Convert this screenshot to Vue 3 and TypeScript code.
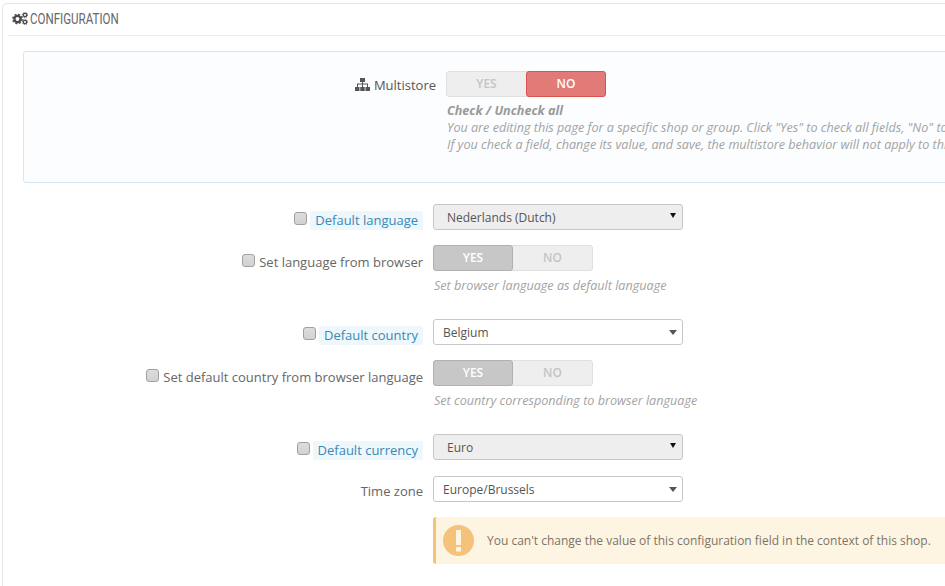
<script setup lang="ts">
interface Row {
  label: string
  kind: 'select' | 'toggle'
  gap: string
  check?: boolean
  tag?: boolean
  disabled?: boolean
  value?: string
  help?: string
}
const rows: Row[] = [
  { label: 'Default language', kind: 'select', gap: 'gap-21', check: true, tag: true, disabled: true, value: 'Nederlands (Dutch)' },
  { label: 'Set language from browser', kind: 'toggle', gap: 'gap-15', check: true, help: 'Set browser language as default language' },
  { label: 'Default country', kind: 'select', gap: 'gap-25', check: true, tag: true, value: 'Belgium' },
  { label: 'Set default country from browser language', kind: 'toggle', gap: 'gap-15', check: true, help: 'Set country corresponding to browser language' },
  { label: 'Default currency', kind: 'select', gap: 'gap-25', check: true, tag: true, disabled: true, value: 'Euro' },
  { label: 'Time zone', kind: 'select', gap: 'gap-16', value: 'Europe/Brussels' },
]
</script>

<template>
  <div class="page">
    <section class="panel">
      <h3 class="heading">
        <svg class="cogs" viewBox="0 0 16 13" width="16" height="13" aria-hidden="true">
          <g fill="none" stroke="#4a4a4a">
            <circle cx="5.500" cy="7" r="3.100" stroke-width="2.300" />
            <circle cx="5.500" cy="7" r="4.600" stroke-width="1.500" stroke-dasharray="2 1.610" />
            <circle cx="13" cy="3" r="1.700" stroke-width="1.300" />
            <circle cx="13" cy="3" r="2.700" stroke-width=".9" stroke-dasharray="1.100 1.020" />
            <circle cx="13" cy="10" r="1.700" stroke-width="1.300" />
            <circle cx="13" cy="10" r="2.700" stroke-width=".9" stroke-dasharray="1.100 1.020" />
          </g>
        </svg>
        <span class="title">CONFIGURATION</span>
      </h3>

      <div class="info">
        <div class="info-row">
          <div class="info-label">
            <svg viewBox="0 0 15 13" width="15" height="13" aria-hidden="true">
              <g fill="#555">
                <rect x="5" y="0" width="5" height="4" />
                <rect x="7" y="4" width="1" height="2" />
                <rect x="2" y="5.500" width="11" height="1" />
                <rect x="2" y="6" width="1" height="3" />
                <rect x="7" y="6" width="1" height="3" />
                <rect x="12" y="6" width="1" height="3" />
                <rect x="0" y="9" width="4.500" height="4" />
                <rect x="5.250" y="9" width="4.500" height="4" />
                <rect x="10.500" y="9" width="4.500" height="4" />
              </g>
            </svg>
            <span>Multistore</span>
          </div>
          <div class="info-body">
            <div class="toggle">
              <span class="opt">YES</span>
              <span class="opt no-on">NO</span>
            </div>
            <p class="help strong">Check / Uncheck all</p>
            <p class="help">You are editing this page for a specific shop or group. Click "Yes" to check all fields, "No" to uncheck all.</p>
            <p class="help">If you check a field, change its value, and save, the multistore behavior will not apply to this shop.</p>
          </div>
        </div>
      </div>

      <div class="form">
        <div v-for="row in rows" :key="row.label" class="row" :class="row.gap">
          <div class="label" :class="{ 'label-toggle': row.kind === 'toggle', 'label-tag': row.tag }">
            <input v-if="row.check" type="checkbox" class="check" :aria-label="row.label" />
            <span :class="{ tag: row.tag }">{{ row.label }}</span>
          </div>
          <div class="control">
            <div v-if="row.kind === 'select'" class="select" :class="{ disabled: row.disabled }">
              <span>{{ row.value }}</span>
              <i class="caret" />
            </div>
            <template v-else>
              <div class="toggle">
                <span class="opt yes-on">YES</span>
                <span class="opt">NO</span>
              </div>
              <p class="help help-below">{{ row.help }}</p>
            </template>
          </div>
        </div>

        <div class="alert">
          <svg class="alert-icon" viewBox="0 0 31 31" width="31" height="31" aria-hidden="true">
            <circle cx="15.500" cy="15.500" r="15.500" fill="#f5c27a" />
            <rect x="13" y="5" width="5" height="15" fill="#fdf5e2" />
            <rect x="13" y="22" width="5" height="4.500" fill="#fdf5e2" />
          </svg>
          <span>You can't change the value of this configuration field in the context of this shop.</span>
        </div>
      </div>
    </section>
  </div>
</template>

<style>
html, body { margin: 0; background: #fff; overflow: hidden; }
</style>

<style scoped>
.page {
  width: 945px;
  height: 586px;
  overflow: hidden;
  background: #fff;
  font-family: "Open Sans", "Liberation Sans", sans-serif;
  font-size: 12px;
  color: #666;
}
.panel {
  width: 1100px;
  height: 700px;
  margin: 3px 0 0 2px;
  padding: 0 5px;
  box-sizing: border-box;
  border: 1px solid #e6e6e6;
  border-radius: 5px;
}
.heading {
  display: flex;
  align-items: center;
  gap: 2px;
  height: 29px;
  margin: 0 0 15px;
  padding: 0 0 2px 4px;
  border-bottom: 1px solid #eee;
  font-weight: 400;
}
.title {
  display: inline-block;
  font-family: "Roboto", sans-serif;
  font-size: 14px;
  color: #666;
  transform: scaleX(.825);
  transform-origin: left center;
}
.info {
  height: 132px;
  margin-left: 15px;
  padding-top: 19px;
  box-sizing: border-box;
  border: 1px solid #d3e8f2;
  border-radius: 3px;
  background: #fbfdff;
}
.info-row { display: flex; }
.info-label {
  width: 412px;
  height: 26px;
  flex: none;
  display: flex;
  align-items: center;
  justify-content: flex-end;
  gap: 4px;
  padding-top: 1px;
  box-sizing: border-box;
  font-size: 13px;
  color: #555;
}
.info-body { margin-left: 10px; }
.toggle {
  display: flex;
  width: 160px;
  height: 26px;
  box-sizing: border-box;
  border: 1px solid #e0e0e0;
  border-radius: 3px;
  background: #eee;
  font-size: 12px;
  font-weight: 600;
}
.opt {
  width: 79px;
  flex: none;
  display: flex;
  align-items: center;
  justify-content: center;
  padding-bottom: 2px;
  color: #c4c4c4;
  box-sizing: border-box;
}
.no-on {
  width: 80px;
  margin: -1px -1px -1px 0;
  background: #e27b77;
  border: 1px solid #d9534f;
  border-radius: 3px;
  color: #fff;
}
.yes-on {
  width: 80px;
  margin: -1px 0 -1px -1px;
  background: #c7c7c7;
  border: 1px solid #b0b0b0;
  border-radius: 3px;
  color: #fff;
}
.help {
  margin: 0;
  padding-left: 1px;
  font-size: 12.600px;
  line-height: 17px;
  font-style: italic;
  color: #a3a3a3;
  white-space: nowrap;
}
.strong { margin-top: 5px; font-weight: 700; color: #999; }
.help-below { margin-top: 6px; }

.form { display: flex; flex-direction: column; }
.row { display: flex; }
.gap-21 { margin-top: 21px; }
.gap-15 { margin-top: 15px; }
.gap-25 { margin-top: 25px; }
.gap-16 { margin-top: 16px; }
.label {
  width: 415px;
  height: 26px;
  flex: none;
  display: flex;
  justify-content: flex-end;
  align-items: center;
  gap: 4px;
  padding-top: 4px;
  box-sizing: border-box;
  font-size: 13px;
  color: #666;
  white-space: nowrap;
}
.label-toggle { padding-top: 8px; }
.label-tag { padding-top: 0; align-items: flex-start; gap: 3px; }
.tag {
  display: inline-flex;
  align-items: center;
  height: 19px;
  margin-top: 7px;
  padding: 0 5px 1px;
  box-sizing: border-box;
  border-radius: 2px;
  background: #edf7fc;
  color: #3c88b4;
}
.check {
  appearance: none;
  width: 13px;
  height: 13px;
  margin: 0 0 3px;
  box-sizing: border-box;
  border: 1px solid #a0a0a0;
  border-radius: 3px;
  background: linear-gradient(#dcdcdc, #d2d2d2);
}
.label-tag .check { margin: 8px 0 0; }
.control { width: 250px; margin-left: 10px; }
.select {
  position: relative;
  height: 26px;
  display: flex;
  align-items: center;
  padding-left: 9px;
  box-sizing: border-box;
  border: 1px solid #c7c7c7;
  border-radius: 3px;
  background: #fff;
  color: #555;
  font-size: 12px;
}
.select.disabled { padding-left: 13px; background: #eee; }
.caret {
  position: absolute;
  right: 5px;
  top: 10px;
  width: 0;
  height: 0;
  border-style: solid;
  border-color: #555 transparent transparent;
  border-width: 5px 4px 0;
}
.disabled .caret { top: 8px; right: 6px; border-top-color: #111; border-width: 5px 3px 0; }
.alert {
  display: flex;
  align-items: center;
  gap: 13px;
  width: 640px;
  height: 47px;
  margin: 15px 0 0 425px;
  padding-left: 7px;
  box-sizing: border-box;
  border-left: 3px solid #f5c27a;
  border-radius: 3px;
  background: #fdf5e2;
  font-size: 12px;
  color: #7d7466;
  white-space: nowrap;
}
.alert-icon { flex: none; }
</style>
